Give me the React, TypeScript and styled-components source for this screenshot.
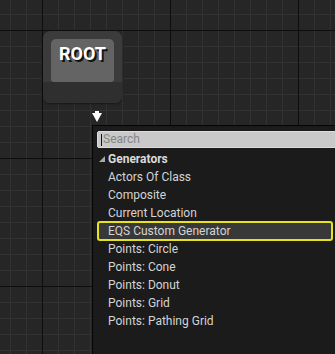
import React from "react";
import styled, { createGlobalStyle } from "styled-components";

const Global = createGlobalStyle`
  html, body { margin: 0; padding: 0; }
  body {
    width: 335px;
    height: 354px;
    overflow: hidden;
    background-color: #262626;
    font-family: Roboto, "Liberation Sans", sans-serif;
  }
`;

const Canvas = styled.div`
  position: relative;
  width: 335px;
  height: 354px;
  overflow: hidden;
  background-color: #262626;
  background-image:
    linear-gradient(to right, #0e0e0e 0 1px, transparent 1px),
    linear-gradient(to bottom, #0e0e0e 0 1px, transparent 1px),
    linear-gradient(to right, #323232 0 1px, transparent 1px),
    linear-gradient(to bottom, #323232 0 1px, transparent 1px);
  background-size: 128px 128px, 128px 128px, 16px 16px, 16px 16px;
  background-position: 42px 0, 0 30px, 10px 0, 0 14px;
`;

const Node = styled.div`
  position: absolute;
  left: 43px;
  top: 31px;
  width: 79px;
  height: 72px;
  border-radius: 7px;
  background: #3b3b3b;
  display: flex;
  flex-direction: column;
  overflow: hidden;
  box-shadow: 0 1px 2px rgba(0, 0, 0, 0.4);
`;

const NodeBody = styled.div`
  padding: 8px 8px 0;
  display: flex;
`;

const NodeTitleBox = styled.div`
  flex: 1;
  height: 43px;
  border-radius: 5px 5px 3px 3px;
  background: #646464;
  display: flex;
  justify-content: center;
  padding-top: 4px;
  box-sizing: border-box;
`;

const NodeTitle = styled.span`
  color: #ffffff;
  font-weight: 700;
  font-size: 18px;
  line-height: 21px;
  text-shadow: 2px 2px 0 #111;
`;

const NodeFooter = styled.div`
  flex: 1;
  background: #2f2f2f;
`;

const Pin = styled.svg`
  position: absolute;
  left: 91px;
  top: 110px;
`;

const Menu = styled.div`
  position: absolute;
  left: 92px;
  top: 125px;
  width: 260px;
  height: 240px;
  background: #1b1b1b;
  border: 1px solid #050505;
  box-sizing: border-box;
  padding: 5px 0 0 4px;
  display: flex;
  flex-direction: column;
`;

const SearchBox = styled.div`
  height: 17px;
  width: 260px;
  background: #c9c9c9;
  border: 1px solid #dcdcdc;
  border-radius: 2px;
  box-sizing: border-box;
  display: flex;
  align-items: center;
  padding-left: 3px;
`;

const Caret = styled.span`
  width: 1px;
  height: 12px;
  background: #111;
  margin-right: 1px;
`;

const Placeholder = styled.span`
  color: #858585;
  font-size: 12px;
  line-height: 15px;
`;

const List = styled.div`
  width: 236px;
  margin-top: 2px;
  display: flex;
  flex-direction: column;
`;

const Header = styled.div`
  height: 18px;
  display: flex;
  align-items: center;
  color: #dadada;
  font-weight: 700;
  font-size: 12px;
  line-height: 18px;
`;

const Arrow = styled.svg`
  margin: 0 3px 0 2px;
`;

const Item = styled.div<{ $active?: boolean }>`
  height: ${(p) => (p.$active ? "20px" : "18px")};
  margin: ${(p) => (p.$active ? "-1px 0" : "0")};
  box-sizing: border-box;
  border: ${(p) => (p.$active ? "2px solid #e6e21e" : "0")};
  border-radius: 3px;
  background: ${(p) => (p.$active ? "#383838" : "transparent")};
  padding-left: ${(p) => (p.$active ? "9px" : "11px")};
  color: #d4d4d4;
  font-size: 12px;
  line-height: ${(p) => (p.$active ? "16px" : "18px")};
  white-space: nowrap;
`;

const items = [
  "Actors Of Class",
  "Composite",
  "Current Location",
  "EQS Custom Generator",
  "Points: Circle",
  "Points: Cone",
  "Points: Donut",
  "Points: Grid",
  "Points: Pathing Grid",
];

export default function App() {
  return (
    <>
      <Global />
      <Canvas>
        <Node>
          <NodeBody>
            <NodeTitleBox>
              <NodeTitle>ROOT</NodeTitle>
            </NodeTitleBox>
          </NodeBody>
          <NodeFooter />
        </Node>
        <Pin width="12" height="14" viewBox="0 0 12 14">
          <rect x="4" y="1" width="4" height="2" fill="#ffffff" />
          <polygon points="1,3 11,3 6,12" fill="#ffffff" />
        </Pin>
        <Menu>
          <SearchBox>
            <Caret />
            <Placeholder>Search</Placeholder>
          </SearchBox>
          <List>
            <Header>
              <Arrow width="6" height="6" viewBox="0 0 6 6">
                <polygon points="6,0 6,6 0,6" fill="#a8a8a8" />
              </Arrow>
              Generators
            </Header>
            {items.map((t) => (
              <Item key={t} $active={t === "EQS Custom Generator"}>
                {t}
              </Item>
            ))}
          </List>
        </Menu>
      </Canvas>
    </>
  );
}
